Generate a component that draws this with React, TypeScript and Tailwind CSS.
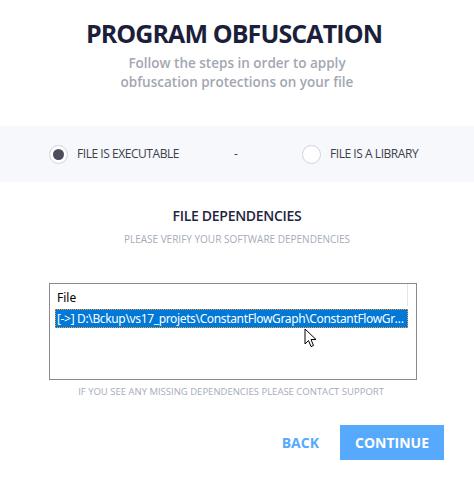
import type { JSX } from 'react';

// Radio option in the grey band
function Radio({ checked, label }: { checked: boolean; label: string }): JSX.Element {
    return (
        <div className="flex items-center gap-[9px]">
            <div className="w-[19px] h-[19px] rounded-full border border-[#d0d3d9] bg-white flex items-center justify-center">
                {checked && <div className="w-[11px] h-[11px] rounded-full bg-[#4b4e5c]" />}
            </div>
            <span className="text-[12px] text-[#3c3f4c] leading-none tracking-[-0.45px]">{label}</span>
        </div>
    );
}

function Cursor(): JSX.Element {
    return (
        <svg width="14" height="21" viewBox="0 0 14 21" className="absolute left-[304px] top-[328px]">
            <path
                d="M1 1 L1 16 L4.5 12.5 L7 18.5 L9.5 17.5 L7 11.5 L12 11.5 Z"
                fill="#ffffff"
                stroke="#000000"
                strokeWidth="1"
                strokeLinejoin="round"
            />
        </svg>
    );
}

export default function App(): JSX.Element {
    return (
        <div className="relative w-[474px] h-[484px] bg-white font-['Open_Sans','Noto_Sans',sans-serif] overflow-hidden">
            {/* Header */}
            <h1 className="pt-[17px] text-center text-[25px] leading-[32px] font-bold text-[#1b1f3b] tracking-[-0.9px] pr-[6px]">
                PROGRAM OBFUSCATION
            </h1>
            <p className="mt-[5px] text-center text-[13.5px] leading-[19px] font-semibold text-[#a3a7b1]">
                Follow the steps in order to apply
                <br />
                obfuscation protections on your file
            </p>

            {/* File type */}
            <div className="mt-[34px] h-[56px] bg-[#f7f8fb] flex items-center pl-[49px]">
                <div className="w-[185px]">
                    <Radio checked label="FILE IS EXECUTABLE" />
                </div>
                <span className="w-[68px] text-[12px] text-[#3c3f4c]">-</span>
                <Radio checked={false} label="FILE IS A LIBRARY" />
            </div>

            {/* Dependencies */}
            <h2 className="mt-[24px] text-center text-[14px] leading-[20px] font-semibold text-[#1f2540] tracking-[-0.3px]">
                FILE DEPENDENCIES
            </h2>
            <p className="mt-[7px] text-center text-[10px] leading-[12px] text-[#a5acba]">
                PLEASE VERIFY YOUR SOFTWARE DEPENDENCIES
            </p>

            <div className="mt-[38px] ml-[49px] w-[368px] h-[97px] border border-[#8a8a8a] bg-white font-['Noto_Sans','Open_Sans',sans-serif]">
                <div className="flex h-[23px]">
                    <div className="w-[357px] pl-[7px] pt-[6px] text-[12px] leading-[16px] text-black">File</div>
                    <div className="w-px h-[22px] bg-[#e5e5e5]" />
                </div>
                <div className="mt-[2px] ml-[5px] w-[353px] h-[19px] bg-[#0078d7] border border-dotted border-[#f39c34] px-[1px] text-[12px] leading-[17px] text-white truncate tracking-[-0.35px]">
                    [-&gt;] D:\Bckup\vs17_projets\ConstantFlowGraph\ConstantFlowGraph\Release\ConstantFlowGraph.exe
                </div>
            </div>

            <p className="mt-[6px] text-center text-[9.5px] leading-[12px] text-[#a5acba] pr-[12px]">
                IF YOU SEE ANY MISSING DEPENDENCIES PLEASE CONTACT SUPPORT
            </p>

            {/* Actions */}
            <div className="mt-[27px] flex items-center justify-end pr-[30px] gap-[21px]">
                <button className="text-[14px] font-bold text-[#57a9fb] leading-none">BACK</button>
                <button className="w-[104px] h-[35px] bg-[#57a9fb] text-white text-[14px] font-bold">CONTINUE</button>
            </div>

            <Cursor />
        </div>
    );
}
